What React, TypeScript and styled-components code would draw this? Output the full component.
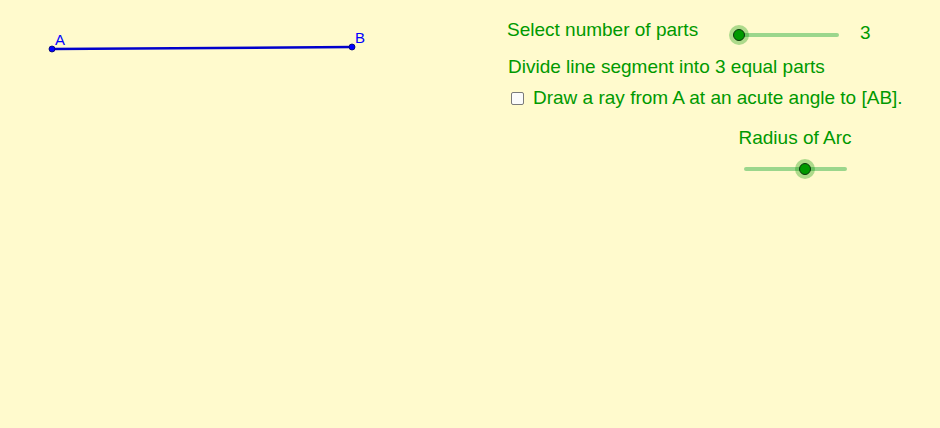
import React from 'react';
import styled, { createGlobalStyle } from 'styled-components';

const GlobalStyle = createGlobalStyle`
  html, body {
    margin: 0;
    padding: 0;
    background: #fffacd;
  }
  body {
    font-family: "Liberation Sans", Arial, sans-serif;
  }
`;

const Canvas = styled.div`
  position: relative;
  width: 940px;
  height: 428px;
  overflow: hidden;
  background: #fffacd;
`;

// the construction itself lives on the geometry canvas
const Drawing = styled.svg`
  position: absolute;
  left: 0;
  top: 0;
`;

// controls block, pinned where the applet author placed it
const Controls = styled.div`
  position: absolute;
  left: 507px;
  top: 19px;
  display: flex;
  flex-direction: column;
  align-items: flex-start;
  color: #009900;
  font-size: 19px;
  line-height: 22px;
  white-space: nowrap;
`;

const SliderRow = styled.div`
  display: grid;
  grid-template-columns: 232px 100px auto;
  align-items: start;
  height: 23px;
`;

const Value = styled.span`
  margin: 3px 0 0 21px;
`;

const Text = styled.div<{ gap?: number; indent?: number }>`
  margin-top: ${({ gap = 0 }) => gap}px;
  margin-left: ${({ indent = 0 }) => indent}px;
`;

const CheckRow = styled.label`
  display: flex;
  align-items: center;
  gap: 9px;
  margin-top: 9px;
  margin-left: 4px;
  cursor: pointer;
`;

const Box = styled.span`
  width: 11px;
  height: 11px;
  border: 1px solid #7a7a7a;
  border-radius: 2px;
  background: #fbfbfb;
`;

const ArcBlock = styled.div`
  display: flex;
  flex-direction: column;
  align-items: center;
  gap: 10px;
  width: 116px;
  margin-top: 18px;
  margin-left: 230px;
`;

const SliderWrap = styled.div<{ w: number; drop?: number }>`
  position: relative;
  width: ${({ w }) => w}px;
  height: 20px;
  margin-top: ${({ drop = 0 }) => drop}px;
`;

const Track = styled.div`
  position: absolute;
  left: 0;
  right: 0;
  top: 8px;
  height: 4px;
  border-radius: 2px;
  background: #9bd68c;
`;

const Knob = styled.div`
  position: absolute;
  top: 0;
  width: 20px;
  height: 20px;
  margin-left: -10px;
  border-radius: 50%;
  background: rgba(0, 153, 0, 0.32);
  display: flex;
  align-items: center;
  justify-content: center;

  &::after {
    content: '';
    width: 10px;
    height: 10px;
    border-radius: 50%;
    background: #009900;
    border: 1px solid #0a360a;
  }
`;

function Slider({ w, pos, drop }: { w: number; pos: number; drop?: number }) {
  return (
    <SliderWrap w={w} drop={drop}>
      <Track />
      <Knob style={{ left: `${pos}px` }} />
    </SliderWrap>
  );
}

export default function App() {
  return (
    <>
      <GlobalStyle />
      <Canvas>
        <Drawing width="940" height="428">
          <line x1="52" y1="49" x2="352" y2="47" stroke="#0000cc" strokeWidth="2.5" />
          <circle cx="52" cy="49" r="3" fill="#0000ff" stroke="#000066" strokeWidth="0.8" />
          <circle cx="352" cy="47" r="3" fill="#0000ff" stroke="#000066" strokeWidth="0.8" />
          <text x="55" y="45" fill="#0000ff" fontSize="15" fontFamily="Liberation Sans, Arial, sans-serif">
            A
          </text>
          <text x="355" y="43" fill="#0000ff" fontSize="15" fontFamily="Liberation Sans, Arial, sans-serif">
            B
          </text>
        </Drawing>

        <Controls>
          <SliderRow>
            <span>Select number of parts</span>
            <Slider w={100} pos={0} drop={6} />
            <Value>3</Value>
          </SliderRow>
          <Text gap={14} indent={1}>Divide line segment into 3 equal parts</Text>
          <CheckRow>
            <Box />
            Draw a ray from A at an acute angle to [AB].
          </CheckRow>
          <ArcBlock>
            <span>Radius of Arc</span>
            <Slider w={103} pos={61} />
          </ArcBlock>
        </Controls>
      </Canvas>
    </>
  );
}
